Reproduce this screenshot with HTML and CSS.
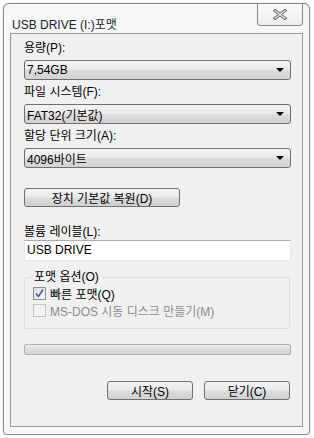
FILE: index.html
```html
<!DOCTYPE html>
<html lang="ko">
<head>
    <meta charset="UTF-8">
    <title>USB DRIVE (I:)포맷</title>
    <link rel="stylesheet" href="styles.css">
</head>
<body>
    <div class="window">
        <div class="titlebar">
            <span class="title">USB DRIVE (I:)포맷</span>
            <div class="close-btn">
                <svg width="14" height="11" viewBox="0 0 14 11">
                    <path d="M2 1.5 L12 9.5 M12 1.5 L2 9.5" stroke="#6a6a6a" stroke-width="3.2" stroke-linecap="square"/>
                    <path d="M2 1.5 L12 9.5 M12 1.5 L2 9.5" stroke="#f4f4f4" stroke-width="1.2" stroke-linecap="square"/>
                </svg>
            </div>
        </div>

        <div class="panel">
            <div class="label first">용량(P):</div>
            <div class="combo"><span>7,54GB</span><i class="arrow"></i></div>

            <div class="label">파일 시스템(F):</div>
            <div class="combo"><span>FAT32(기본값)</span><i class="arrow"></i></div>

            <div class="label">할당 단위 크기(A):</div>
            <div class="combo"><span>4096바이트</span><i class="arrow"></i></div>

            <div class="btn restore">장치 기본값 복원(D)</div>

            <div class="label volume">볼륨 레이블(L):</div>
            <div class="textbox">USB DRIVE</div>

            <!-- format options group -->
            <div class="group">
                <div class="legend">포맷 옵션(O)</div>
                <div class="check-row">
                    <span class="checkbox checked">
                        <svg width="9" height="9" viewBox="0 0 9 9">
                            <path d="M1 4.5 L3.5 7.5 L8 0.5" fill="none" stroke="#4660a8" stroke-width="1.6"/>
                        </svg>
                    </span>
                    <span>빠른 포맷(Q)</span>
                </div>
                <div class="check-row disabled">
                    <span class="checkbox"></span>
                    <span>MS-DOS 시동 디스크 만들기(M)</span>
                </div>
            </div>

            <div class="progress"></div>

            <div class="actions">
                <div class="btn">시작(S)</div>
                <div class="btn">닫기(C)</div>
            </div>
        </div>
    </div>
</body>
</html>
```

FILE: styles.css
```css
body {
    margin: 0;
    background-color: #fff;
    font-family: "Liberation Sans", "Noto Sans CJK KR", sans-serif;
    font-size: 12px;
    color: #000;
}
.window {
    margin: 3px 0 0 3px;
    width: 307px;
    height: 432px;
    box-sizing: border-box;
    background-color: #f6f7f9;
    border: 1px solid #8c8c8c;
    border-radius: 6px 6px 4px 4px;
    box-shadow: 0 0 2px rgba(0, 0, 0, 0.25);
    padding: 0 6px 7px 6px;
}
.titlebar {
    height: 29px;
    display: flex;
    justify-content: space-between;
    align-items: flex-start;
}
.title {
    margin: 11px 0 0 2px;
    color: #1e1e2a;
    font-size: 12px;
}
.close-btn {
    width: 46px;
    height: 22px;
    box-sizing: border-box;
    border: 1px solid #8a8a8a;
    border-top: none;
    border-radius: 0 0 4px 4px;
    background: linear-gradient(#fbfbfb, #eeeeee);
    display: flex;
    align-items: center;
    justify-content: center;
}
.panel {
    height: 394px;
    box-sizing: border-box;
    background-color: #f0f0f0;
    border: 1px solid #9a9a9a;
    padding: 7px 11px 0 13px;
}
.label {
    height: 14px;
    line-height: 14px;
    margin-top: 5px;
}
.label.first {
    margin-top: 0;
}
.combo {
    height: 20px;
    box-sizing: border-box;
    margin-top: 5px;
    border: 1px solid #707070;
    border-radius: 3px;
    background: linear-gradient(#f3f3f3 0%, #ebebeb 48%, #dddddd 52%, #d2d2d2 100%);
    display: flex;
    align-items: center;
    justify-content: space-between;
    padding: 0 6px 0 2px;
}
.arrow {
    width: 0;
    height: 0;
    border-left: 4px solid transparent;
    border-right: 4px solid transparent;
    border-top: 4px solid #000;
}
.btn {
    height: 19px;
    width: 86px;
    box-sizing: border-box;
    border: 1px solid #707070;
    border-radius: 3px;
    background: linear-gradient(#f2f2f2 0%, #ebebeb 48%, #dddddd 52%, #cfcfcf 100%);
    display: flex;
    align-items: center;
    justify-content: center;
}
.btn.restore {
    width: 156px;
    margin-top: 20px;
}
.label.volume {
    margin-top: 18px;
}
.textbox {
    height: 21px;
    box-sizing: border-box;
    margin-top: 1px;
    background-color: #fff;
    border: 1px solid #e3e9ef;
    border-top-color: #abadb3;
    padding: 2px 0 0 2px;
}
.group {
    margin-top: 16px;
    margin-right: 1px;
    height: 52px;
    box-sizing: border-box;
    border: 1px solid #d5dfe5;
    border-radius: 3px;
    padding: 0 0 0 8px;
}
.legend {
    margin-top: -8px;
    width: fit-content;
    padding: 0 2px 0 1px;
    background-color: #f0f0f0;
    line-height: 14px;
}
.check-row {
    display: flex;
    align-items: center;
    gap: 4px;
    height: 16px;
    margin-top: 1px;
}
.check-row.disabled {
    color: #8d8d8d;
}
.checkbox {
    width: 13px;
    height: 13px;
    box-sizing: border-box;
    border: 1px solid #8e8f8f;
    background: linear-gradient(135deg, #dcdcdc, #fbfbfb);
    display: flex;
    align-items: center;
    justify-content: center;
}
.disabled .checkbox {
    border-color: #c5c5c5;
    background: #f4f4f4;
}
.progress {
    margin-top: 15px;
    height: 11px;
    box-sizing: border-box;
    border: 1px solid #b2b2b2;
    border-radius: 2px;
    background: linear-gradient(#eaeaea, #d2d2d2);
}
.actions {
    margin-top: 26px;
    display: flex;
    justify-content: flex-end;
    gap: 11px;
    padding-right: 1px;
}
```
